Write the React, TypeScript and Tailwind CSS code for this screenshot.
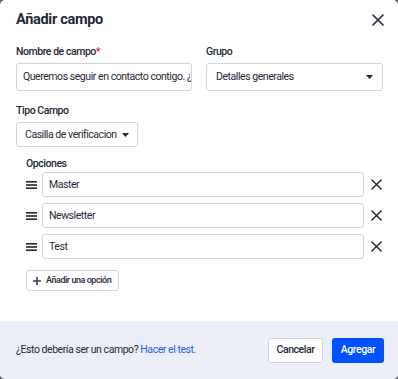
import React from "react";

const font = { fontFamily: "'Roboto', 'Liberation Sans', sans-serif" };

const Caret = () => (
  <svg width="7" height="4" viewBox="0 0 7 4" className="shrink-0">
    <path d="M0 0 L7 0 L3.5 4 Z" fill="#1f2937" />
  </svg>
);

const XIcon = ({ size = 12 }: { size?: number }) => (
  <svg width={size} height={size} viewBox="0 0 12 12" className="shrink-0">
    <path d="M1 1 L11 11 M11 1 L1 11" stroke="#1f2937" strokeWidth="1.6" strokeLinecap="round" />
  </svg>
);

const Grip = () => (
  <svg width="11" height="8" viewBox="0 0 11 8" className="shrink-0">
    <rect x="0" y="0" width="11" height="1.6" fill="#1f2937" />
    <rect x="0" y="3.2" width="11" height="1.6" fill="#1f2937" />
    <rect x="0" y="6.4" width="11" height="1.6" fill="#1f2937" />
  </svg>
);

const options = ["Master", "Newsletter", "Test"];

export default function App() {
  return (
    <div className="w-[398px] h-[379px] bg-[#5b5b5b] tracking-[-0.45px]" style={font}>
      <div className="w-full h-full bg-white rounded-[5px] overflow-hidden flex flex-col">
        <div className="flex items-center justify-between pl-4 pr-[14px] pt-[11px]">
          <h2 className="text-[14.5px] font-bold text-[#1f2937] leading-[18px] tracking-[-0.3px]">Añadir campo</h2>
          <XIcon size={12} />
        </div>

        <div className="px-4 pt-[16px] flex-1">
          <div className="grid grid-cols-[176px_177px] gap-x-[14px]">
            <div>
              <label className="block text-[10.5px] font-medium text-[#1f2937] leading-[13px] mb-[5px]">
                Nombre de campo<span className="text-[#e11d48]">*</span>
              </label>
              <div className="h-[28px] border border-[#d1d5db] rounded-[3px] px-[6px] flex items-center overflow-hidden">
                <span className="text-[10.5px] text-[#1f2937] whitespace-nowrap">
                  Queremos seguir en contacto contigo. ¿
                </span>
              </div>
            </div>
            <div>
              <label className="block text-[10.5px] font-medium text-[#1f2937] leading-[13px] mb-[5px]">Grupo</label>
              <div className="h-[28px] border border-[#d1d5db] rounded-[3px] pl-[9px] pr-[9px] flex items-center justify-between">
                <span className="text-[10.5px] text-[#1f2937]">Detalles generales</span>
                <Caret />
              </div>
            </div>
          </div>

          <label className="block text-[10.5px] font-medium text-[#1f2937] leading-[13px] mt-[13px] mb-[5px]">
            Tipo Campo
          </label>
          <div className="w-[122px] h-[25px] border border-[#d1d5db] rounded-[3px] pl-[8px] pr-[8px] flex items-center justify-between">
            <span className="text-[10.5px] text-[#1f2937] whitespace-nowrap">Casilla de verificacion</span>
            <Caret />
          </div>

          <div className="pl-[10px] mt-[10px]">
            <div className="text-[10.5px] font-medium text-[#1f2937] leading-[13px] mb-[2px]">Opciones</div>
            <div className="flex flex-col gap-[6px]">
              {options.map((o) => (
                <div key={o} className="flex items-center">
                  <Grip />
                  <div className="ml-[5px] w-[323px] h-[25px] border border-[#d1d5db] rounded-[3px] px-[6px] flex items-center">
                    <span className="text-[10.5px] text-[#1f2937]">{o}</span>
                  </div>
                  <div className="ml-[7px]">
                    <XIcon size={11} />
                  </div>
                </div>
              ))}
            </div>
            <button className="mt-[11px] h-[21px] w-[93px] px-[6px] border border-[#d1d5db] rounded-[3px] flex items-center gap-[5px] bg-white">
              <svg width="8" height="8" viewBox="0 0 8 8">
                <path d="M4 0 V8 M0 4 H8" stroke="#374151" strokeWidth="1.6" />
              </svg>
              <span className="text-[9px] font-medium text-[#1f2937] whitespace-nowrap">Añadir una opción</span>
            </button>
          </div>
        </div>

        <div className="h-[58px] bg-[#eceff7] flex items-center justify-between pl-4 pr-[14px]">
          <span className="text-[10.5px] text-[#1f2937]">
            ¿Esto debería ser un campo? <span className="text-[#1d5bff]">Hacer el test.</span>
          </span>
          <div className="flex gap-[9px]">
            <button className="h-[25px] w-[55px] bg-white border border-[#d1d5db] rounded-[3px] text-[10.5px] font-medium text-[#1f2937]">
              Cancelar
            </button>
            <button className="h-[25px] w-[52px] bg-[#0052ff] rounded-[3px] text-[10.5px] font-medium text-white">
              Agregar
            </button>
          </div>
        </div>
      </div>
    </div>
  );
}
